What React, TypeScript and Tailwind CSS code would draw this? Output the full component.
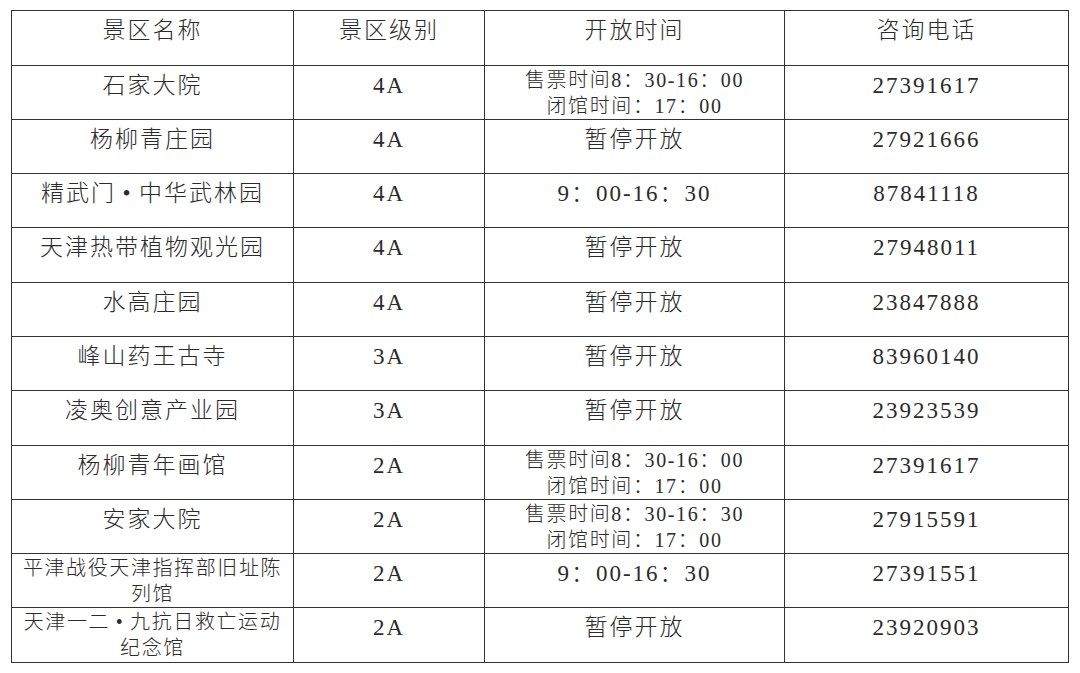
const rows: { name: string[]; level: string; time: string[]; phone: string }[] = [
  { name: ["石家大院"], level: "4A", time: ["售票时间8：30-16：00", "闭馆时间：17：00"], phone: "27391617" },
  { name: ["杨柳青庄园"], level: "4A", time: ["暂停开放"], phone: "27921666" },
  { name: ["精武门•中华武林园"], level: "4A", time: ["9：00-16：30"], phone: "87841118" },
  { name: ["天津热带植物观光园"], level: "4A", time: ["暂停开放"], phone: "27948011" },
  { name: ["水高庄园"], level: "4A", time: ["暂停开放"], phone: "23847888" },
  { name: ["峰山药王古寺"], level: "3A", time: ["暂停开放"], phone: "83960140" },
  { name: ["凌奥创意产业园"], level: "3A", time: ["暂停开放"], phone: "23923539" },
  { name: ["杨柳青年画馆"], level: "2A", time: ["售票时间8：30-16：00", "闭馆时间：17：00"], phone: "27391617" },
  { name: ["安家大院"], level: "2A", time: ["售票时间8：30-16：30", "闭馆时间：17：00"], phone: "27915591" },
  { name: ["平津战役天津指挥部旧址陈", "列馆"], level: "2A", time: ["9：00-16：30"], phone: "27391551" },
  { name: ["天津一二•九抗日救亡运动", "纪念馆"], level: "2A", time: ["暂停开放"], phone: "23920903" },
];

// the middle dot takes a full character cell, as in the source document
function Line({ text }: { text: string }) {
  const parts = text.split("•");
  return (
    <div>
      {parts.map((p, i) => (
        <span key={i}>
          {i > 0 && <span className="inline-block w-[1em] text-center">•</span>}
          {p}
        </span>
      ))}
    </div>
  );
}

function Cell({ lines, className }: { lines: string[]; className: string }) {
  const two = lines.length > 1;
  return (
    <div
      className={`${className} text-center whitespace-nowrap ${
        two ? "pt-[1px] text-[20px] leading-[26px] tracking-[1.6px]" : "pt-[7px] text-[23px] leading-[26px] tracking-[2px]"
      }`}
    >
      {lines.map((l, i) => (
        <Line key={i} text={l} />
      ))}
    </div>
  );
}

export default function App() {
  return (
    <div className="min-h-screen bg-white pt-[10px] pl-[11px] font-['Liberation_Serif','Noto_Sans_CJK_SC',serif] font-light text-[#2b2b2b]">
      <div className="w-[1058px] border border-[#333]">
        <div className="flex h-[53.5px]">
          <Cell className="w-[281px]" lines={["景区名称"]} />
          <Cell className="w-[191px] border-l border-[#333]" lines={["景区级别"]} />
          <Cell className="w-[300px] border-l border-[#333]" lines={["开放时间"]} />
          <Cell className="w-[284px] border-l border-[#333]" lines={["咨询电话"]} />
        </div>
        {rows.map((r, i) => (
          <div key={i} className="flex h-[54.3px] border-t border-[#333]">
            <Cell className="w-[281px]" lines={r.name} />
            <Cell className="w-[191px] border-l border-[#333]" lines={[r.level]} />
            <Cell className="w-[300px] border-l border-[#333]" lines={r.time} />
            <Cell className="w-[284px] border-l border-[#333]" lines={[r.phone]} />
          </div>
        ))}
      </div>
    </div>
  );
}
